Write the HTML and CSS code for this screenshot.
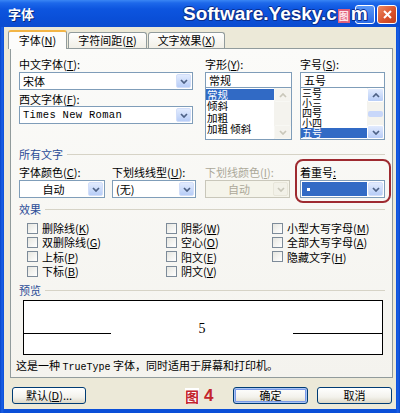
FILE: index.html
```html
<!DOCTYPE html>
<html>
<head>
<meta charset="utf-8">
<link rel="stylesheet" href="styles.css">
</head>
<body>
<div class="window">
  <div class="titlebar">
    <span class="title">字体</span>
    <span class="wm">Software.Yesky.c<span class="stamp">图</span>m</span>
    <div class="tbtns">
      <span class="tb help"></span>
      <span class="tb close"><svg width="9" height="9" viewBox="0 0 9 9"><path d="M1 1L8 8M8 1L1 8" stroke="#fff" stroke-width="2" fill="none"/></svg></span>
    </div>
  </div>
  <div class="client">
    <div class="tabs">
      <div class="tab active">字体(<u>N</u>)</div>
      <div class="tab t2">字符间距(<u>R</u>)</div>
      <div class="tab t3">文字效果(<u>X</u>)</div>
    </div>
    <div class="panel">
      <div class="top">
        <div class="c1">
          <div class="lbl">中文字体(<u>T</u>):</div>
          <div class="combo"><span class="val">宋体</span><span class="dd"><svg width="8" height="5" viewBox="0 0 8 5"><path d="M1 1l3 3 3-3" stroke="#4d6185" stroke-width="1.7" fill="none"/></svg></span></div>
          <div class="lbl l2">西文字体(<u>F</u>):</div>
          <div class="combo"><span class="val mono">Times New Roman</span><span class="dd"><svg width="8" height="5" viewBox="0 0 8 5"><path d="M1 1l3 3 3-3" stroke="#4d6185" stroke-width="1.7" fill="none"/></svg></span></div>
        </div>
        <div class="c2">
          <div class="lbl">字形(<u>Y</u>):</div>
          <div class="edit">常规</div>
          <div class="list">
            <div class="items style">
              <div class="it sel">常规</div>
              <div class="it">倾斜</div>
              <div class="it">加粗</div>
              <div class="it">加粗 倾斜</div>
            </div>
            <div class="vs dis">
              <span class="sb"><svg width="8" height="5" viewBox="0 0 8 5"><path d="M1 4l3-3 3 3" stroke="#c9c7ba" stroke-width="1.7" fill="none"/></svg></span>
              <span class="track"></span>
              <span class="sb"><svg width="8" height="5" viewBox="0 0 8 5"><path d="M1 1l3 3 3-3" stroke="#c9c7ba" stroke-width="1.7" fill="none"/></svg></span>
            </div>
          </div>
        </div>
        <div class="c3">
          <div class="lbl">字号(<u>S</u>):</div>
          <div class="edit">五号</div>
          <div class="list">
            <div class="items size">
              <div class="it">三号</div>
              <div class="it">小三</div>
              <div class="it">四号</div>
              <div class="it">小四</div>
              <div class="it sel">五号</div>
            </div>
            <div class="vs">
              <span class="sb"><svg width="8" height="5" viewBox="0 0 8 5"><path d="M1 4l3-3 3 3" stroke="#4d6185" stroke-width="1.7" fill="none"/></svg></span>
              <span class="track"><span class="thumb"></span></span>
              <span class="sb"><svg width="8" height="5" viewBox="0 0 8 5"><path d="M1 1l3 3 3-3" stroke="#4d6185" stroke-width="1.7" fill="none"/></svg></span>
            </div>
          </div>
        </div>
      </div>

      <div class="grp g1">所有文字</div>
      <div class="row3">
        <div class="f f1">
          <div class="lbl">字体颜色(<u>C</u>):</div>
          <div class="combo"><span class="val ctr">自动</span><span class="dd"><svg width="8" height="5" viewBox="0 0 8 5"><path d="M1 1l3 3 3-3" stroke="#4d6185" stroke-width="1.7" fill="none"/></svg></span></div>
        </div>
        <div class="f f2">
          <div class="lbl">下划线线型(<u>U</u>):</div>
          <div class="combo"><span class="val">(无)</span><span class="dd"><svg width="8" height="5" viewBox="0 0 8 5"><path d="M1 1l3 3 3-3" stroke="#4d6185" stroke-width="1.7" fill="none"/></svg></span></div>
        </div>
        <div class="f f3">
          <div class="lbl dim">下划线颜色(<u>I</u>):</div>
          <div class="combo disabled"><span class="val ctr">自动</span><span class="dd"><svg width="8" height="5" viewBox="0 0 8 5"><path d="M1 1l3 3 3-3" stroke="#c9c7ba" stroke-width="1.7" fill="none"/></svg></span></div>
        </div>
        <div class="f f4">
          <div class="lbl">着重号<u>:</u></div>
          <div class="combo"><span class="val selv"><span class="dot"></span></span><span class="dd"><svg width="8" height="5" viewBox="0 0 8 5"><path d="M1 1l3 3 3-3" stroke="#4d6185" stroke-width="1.7" fill="none"/></svg></span></div>
        </div>
      </div>

      <div class="grp g2">效果</div>
      <div class="checks">
        <label class="ck"><span class="box"></span>删除线(<u>K</u>)</label>
        <label class="ck"><span class="box"></span>双删除线(<u>G</u>)</label>
        <label class="ck"><span class="box"></span>上标(<u>P</u>)</label>
        <label class="ck"><span class="box"></span>下标(<u>B</u>)</label>
        <label class="ck"><span class="box"></span>阴影(<u>W</u>)</label>
        <label class="ck"><span class="box"></span>空心(<u>O</u>)</label>
        <label class="ck"><span class="box"></span>阳文(<u>E</u>)</label>
        <label class="ck"><span class="box"></span>阴文(<u>V</u>)</label>
        <label class="ck"><span class="box"></span>小型大写字母(<u>M</u>)</label>
        <label class="ck"><span class="box"></span>全部大写字母(<u>A</u>)</label>
        <label class="ck"><span class="box"></span>隐藏文字(<u>H</u>)</label>
      </div>

      <div class="grp g3">预览</div>
      <div class="preview">
        <span class="ln left"></span>
        <span class="five">5</span>
        <span class="ln right"></span>
      </div>
      <div class="desc">这是一种 <span class="tt">TrueType</span> 字体，同时适用于屏幕和打印机。</div>

      <div class="mark"></div>
    </div>

    <div class="buttons">
      <span class="btn def">默认(<u>D</u>)...</span>
      <span class="fig"><span class="figc">图</span>4</span>
      <span class="btn ok">确定</span>
      <span class="btn cancel">取消</span>
    </div>
  </div>
</div>
</body>
</html>
```

FILE: styles.css
```css
* { box-sizing: border-box; }
html, body { margin: 0; padding: 0; }
body {
  width: 400px;
  height: 413px;
  overflow: hidden;
  font-family: "Noto Sans CJK SC", "Noto Sans", sans-serif;
  font-size: 11px;
  color: #000;
  background: #0a4fd8;
}
u { text-decoration: underline; }

.window {
  width: 400px;
  height: 413px;
  display: flex;
  flex-direction: column;
  background: linear-gradient(90deg, #0846c8 0, #1a5fe6 2px, #0a4fd8 4px, #0a4fd8 396px, #1a5fe6 398px, #0846c8 400px);
}

.titlebar {
  position: relative;
  height: 27px;
  flex: none;
  display: flex;
  align-items: center;
  padding: 1px 3px 0 8px;
  background: linear-gradient(#3a86f4 0, #1d68ea 3px, #0d55df 9px, #0a4fd8 18px, #0b4cd0 27px);
}
.title {
  color: #fff;
  font-weight: bold;
  font-size: 13px;
  line-height: 14px;
  text-shadow: 1px 1px 0 #0a2a7a;
}
.wm {
  position: absolute;
  left: 183px;
  top: 3px;
  font-family: "Liberation Sans", Arial, sans-serif;
  font-weight: bold;
  font-size: 19px;
  line-height: 21px;
  color: #fff;
  z-index: 2;
  text-shadow: -1px 0 #0b2f8f, 1px 0 #0b2f8f, 0 -1px #0b2f8f, 0 1px #0b2f8f, 1px 1px #0b2f8f;
}
.stamp {
  display: inline-block;
  width: 12px;
  height: 14px;
  margin: 0 1px 0 1px;
  vertical-align: 0;
  background: #e0607a;
  color: #fde6eb;
  font-family: "Noto Sans CJK SC", sans-serif;
  font-size: 10px;
  line-height: 14px;
  text-align: center;
  text-shadow: none;
  font-weight: bold;
}
.tbtns {
  margin-left: auto;
  display: flex;
  gap: 2px;
}
.tb {
  width: 20px;
  height: 19px;
  border: 1px solid #fff;
  border-radius: 3px;
  display: flex;
  align-items: center;
  justify-content: center;
}
.help { background: linear-gradient(#5a98f8, #2a6ae6); }
.close { background: linear-gradient(135deg, #ec8a63, #d8502a 60%, #c2401e); }

.client {
  flex: 1;
  margin: 0 4px 4px 4px;
  padding: 3px 3px 0 6px;
  background: #ece9d8;
  display: flex;
  flex-direction: column;
}

.tabs {
  height: 18px;
  display: flex;
  align-items: flex-end;
  margin-left: -2px;
  flex: none;
}
.tab {
  height: 16px;
  line-height: 15px;
  text-align: center;
  border: 1px solid #919b9c;
  border-bottom: none;
  border-radius: 3px 3px 0 0;
  background: linear-gradient(#fefefe, #f1efe6);
  font-size: 11px;
}
.tab.active {
  position: relative;
  z-index: 1;
  width: 59px;
  height: 19px;
  margin-bottom: -1px;
  line-height: 17px;
  background: #fcfcfb;
  border-top: 2px solid #f3b546;
}
.t2 { width: 79px; margin-left: 1px; }
.t3 { width: 77px; margin-left: 1px; }

.panel {
  position: relative;
  flex: none;
  height: 330px;
  border: 1px solid #919b9c;
  background: linear-gradient(#fbfbf9, #f4f3ee);
  padding: 8px 7px 0 8px;
}

.lbl { height: 14px; line-height: 14px; white-space: nowrap; }
.lbl.dim { color: #aca899; }
.l2 { margin-top: 2px; }

.top { display: flex; }
.c1 { width: 174px; }
.c2 { width: 87px; margin-left: 12px; }
.c3 { width: 85px; margin-left: 8px; }

.combo {
  height: 18px;
  margin-top: 1px;
  border: 1px solid #7f9db9;
  background: #fff;
  display: flex;
}
.c1 .combo:last-child { margin-top: 0; }
.val {
  flex: 1;
  line-height: 16px;
  padding-left: 3px;
  white-space: nowrap;
  overflow: hidden;
}
.val.ctr { text-align: center; padding-left: 0; }
.mono {
  font-family: "Liberation Mono", "Courier New", monospace;
  font-size: 10.5px;
  letter-spacing: 0.3px;
}
.dd {
  width: 15px;
  margin: 1px;
  border: 1px solid #d2def9;
  border-radius: 2px;
  background: linear-gradient(#e2ebfe, #b8cdf7);
  display: flex;
  align-items: center;
  justify-content: center;
}
.combo.disabled { border-color: #c9c7ba; background: #f5f4ea; color: #aca899; }
.combo.disabled .dd { background: #f2f1e8; border-color: #e8e6da; }

.edit {
  height: 16px;
  margin-top: 1px;
  border: 1px solid #7f9db9;
  background: #fff;
  line-height: 14px;
  padding-left: 3px;
}
.list {
  height: 52px;
  border: 1px solid #7f9db9;
  border-top: none;
  background: #fff;
  display: flex;
}
.items { flex: 1; overflow: hidden; }
.items.style { padding-top: 1px; }
.items.style .it { height: 11.3px; line-height: 11.3px; font-size: 10.5px; }
.items.size .it { height: 10px; line-height: 10px; font-size: 10px; }
.it { padding-left: 1px; white-space: nowrap; }
.it.sel { background: #316ac5; color: #fff; }

.vs {
  width: 17px;
  display: flex;
  flex-direction: column;
  background: #f4f3ee;
}
.sb {
  height: 14px;
  border: 1px solid #fff;
  border-radius: 2px;
  background: linear-gradient(#e2ebfe, #b8cdf7);
  display: flex;
  align-items: center;
  justify-content: center;
}
.vs.dis .sb { background: #f4f3ee; border-color: #f8f8f4; }
.track { flex: 1; display: flex; flex-direction: column; justify-content: center; }
.thumb { height: 6px; margin: 0 1px; border-radius: 2px; background: #c8d7fa; }

.grp {
  display: flex;
  align-items: center;
  height: 14px;
  line-height: 14px;
  color: #2b4c97;
}
.grp::after {
  content: "";
  flex: 1;
  height: 1px;
  margin-left: 4px;
  background: #d6d3c6;
}
.g1 { margin-top: 7px; }
.g2 { margin-top: 4px; }
.g3 { margin-top: 5px; }

.row3 { display: flex; margin-top: 4px; }
.f1 { width: 86px; }
.f2 { width: 84px; margin-left: 7px; }
.f3 { width: 85px; margin-left: 9px; }
.f4 { width: 85px; margin-left: 10px; }
.selv {
  margin: 1px 0 1px 1px;
  background: #316ac5;
  display: flex;
  align-items: center;
  padding-left: 5px;
}
.dot { width: 3px; height: 3px; background: #fff; }

.mark {
  position: absolute;
  left: 284px;
  top: 110px;
  width: 96px;
  height: 44px;
  border: 2px solid #9e2a30;
  border-radius: 8px;
}

.checks {
  margin-top: 5px;
  margin-left: 8px;
  display: grid;
  grid-template-columns: 139px 106px 1fr;
  grid-template-rows: repeat(4, 14.3px);
  grid-auto-flow: column;
}
.ck {
  display: flex;
  align-items: center;
  white-space: nowrap;
  line-height: 14px;
}
.box {
  width: 11px;
  height: 11px;
  margin-right: 4px;
  border: 1px solid #7d8b99;
  background: linear-gradient(135deg, #e6e6e0, #fff);
  flex: none;
}

.preview {
  margin: 3px 0 0 4px;
  width: 360px;
  height: 55px;
  border: 1px solid #000;
  background: #fff;
  display: flex;
  align-items: flex-start;
  padding-top: 21px;
}
.ln { height: 1px; background: #000; margin-top: 11px; flex: none; }
.ln.left { width: 87px; }
.ln.right { width: 89px; }
.five {
  flex: 1;
  text-align: center;
  font-family: "Liberation Serif", serif;
  font-size: 14px;
  line-height: 14px;
}

.desc {
  margin: 3px 0 0 -3px;
  height: 14px;
  line-height: 14px;
  white-space: nowrap;
}
.tt {
  font-family: "Liberation Mono", "Courier New", monospace;
  font-size: 10px;
}

.buttons {
  position: relative;
  display: flex;
  margin-top: 9px;
  height: 17px;
}
.btn {
  height: 17px;
  border: 1px solid #003c74;
  border-radius: 3px;
  background: linear-gradient(#fff, #f3f2ec 60%, #dcd8c8);
  text-align: center;
  line-height: 15px;
}
.def { width: 74px; margin-left: 2px; }
.ok {
  width: 75px;
  margin-left: auto;
  box-shadow: inset 0 0 0 1px #a9c4f5, inset 0 0 0 2px #7a9ae8;
}
.cancel { width: 75px; margin-left: 9px; margin-right: 1px; }
.fig {
  position: absolute;
  left: 175px;
  top: -1px;
  color: #c3252c;
  font-family: "Liberation Sans", Arial, sans-serif;
  font-weight: bold;
  font-size: 17px;
  line-height: 19px;
  display: flex;
  align-items: center;
}
.figc {
  font-family: "Noto Sans CJK SC", sans-serif;
  font-size: 14px;
  margin-right: 5px;
  background: #fff;
  line-height: 16px;
}
```
